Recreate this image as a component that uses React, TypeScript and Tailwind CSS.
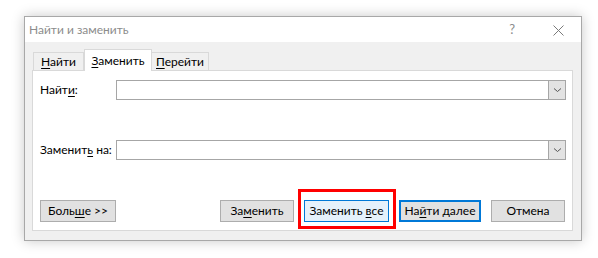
import React from "react";

// Find & Replace dialog (Word-style), 598x258

const FONT = { fontFamily: 'Lato, Roboto, "Noto Sans", sans-serif' };

function Key({ children }: { children: React.ReactNode }) {
  return <span className="underline underline-offset-[2px] decoration-1">{children}</span>;
}

function Chevron() {
  return (
    <svg width="9" height="6" viewBox="0 0 9 6" aria-hidden="true">
      <path d="M1 1.5 L4.5 4.5 L8 1.5" fill="none" stroke="#555" strokeWidth="1" />
    </svg>
  );
}

function Combo() {
  return (
    <div className="flex-1 h-[20px] flex bg-white border border-[#a6a6a6]">
      <div className="flex-1" />
      <div className="w-[17px] h-full bg-[#e3e3e3] border-l border-[#a6a6a6] flex items-center justify-center">
        <Chevron />
      </div>
    </div>
  );
}

function Btn({
  children,
  w,
  variant = "plain",
}: {
  children: React.ReactNode;
  w: string;
  variant?: "plain" | "hover" | "default";
}) {
  const look =
    variant === "hover"
      ? "bg-[#e5f1fb] border border-[#0078d7]"
      : variant === "default"
      ? "bg-[#e1e1e1] border-2 border-[#0078d7]"
      : "bg-[#e1e1e1] border border-[#adadad]";
  return (
    <div className={`${w} h-[22px] flex items-center justify-center text-[12px] text-black whitespace-nowrap ${look}`}>
      <span>{children}</span>
    </div>
  );
}

export default function App() {
  return (
    <div className="w-[598px] h-[258px] bg-white pt-[16px] pl-[24px]" style={FONT}>
      <div className="w-[558px] h-[225px] flex flex-col border border-[#a8a8a8] shadow-[0_0_12px_rgba(0,0,0,0.22)]">
        {/* title bar */}
        <div className="h-[25px] bg-white flex items-center pl-[4px] pr-[17px] pt-[1px]">
          <span className="text-[12px] text-[#8c8c8c] flex-1">Найти и заменить</span>
          <span className="text-[13px] text-[#8c8c8c] mr-[38px]">?</span>
          <svg width="11" height="11" viewBox="0 0 11 11" aria-hidden="true">
            <path d="M0.5 0.5 L10.5 10.5 M10.5 0.5 L0.5 10.5" stroke="#7a7a7a" strokeWidth="1" />
          </svg>
        </div>

        {/* body */}
        <div className="flex-1 bg-[#f0f0f0] pt-[7px] pl-[7px] pr-[8px] pb-[9px] flex flex-col">
          {/* tabs */}
          <div className="h-[21px] flex items-end pl-[1px] text-[12px] text-black whitespace-nowrap">
            <div className="w-[51px] h-[18px] bg-[#f0f0f0] border border-b-0 border-[#d9d9d9] flex items-center justify-center">
              <span><Key>Н</Key>айти</span>
            </div>
            <div className="w-[68px] h-[22px] -mb-px bg-white border border-b-0 border-[#d9d9d9] flex items-center justify-center relative z-10">
              <span><Key>З</Key>аменить</span>
            </div>
            <div className="w-[57px] h-[18px] bg-[#f0f0f0] border border-b-0 border-l-0 border-[#d9d9d9] flex items-center justify-center">
              <span><Key>П</Key>ерейти</span>
            </div>
          </div>

          {/* panel */}
          <div className="flex-1 bg-white border border-[#d9d9d9] pt-[9px] pl-[7px] pr-[6px] flex flex-col text-[12px] text-black">
            <div className="flex items-center">
              <span className="w-[76px] whitespace-nowrap">Найт<Key>и</Key>:</span>
              <Combo />
            </div>
            <div className="flex items-center mt-[40px]">
              <span className="w-[76px] whitespace-nowrap">Заменит<Key>ь</Key> на:</span>
              <Combo />
            </div>
            <div className="flex items-center mt-[40px] pr-[1px]">
              <Btn w="w-[76px]">Боль<Key>ш</Key>е &gt;&gt;</Btn>
              <div className="flex-1" />
              <Btn w="w-[74px]">За<Key>м</Key>енить</Btn>
              <div className="relative ml-[10px]">
                <Btn w="w-[85px]" variant="hover">Заменить <Key>в</Key>се</Btn>
                <div className="absolute -left-[6px] -right-[7px] -top-[11px] -bottom-[7px] border-[3px] border-[#ff0000] pointer-events-none" />
              </div>
              <div className="ml-[10px]">
                <Btn w="w-[82px]" variant="default">На<Key>й</Key>ти далее</Btn>
              </div>
              <div className="ml-[10px]">
                <Btn w="w-[74px]">Отмена</Btn>
              </div>
            </div>
          </div>
        </div>
      </div>
    </div>
  );
}
